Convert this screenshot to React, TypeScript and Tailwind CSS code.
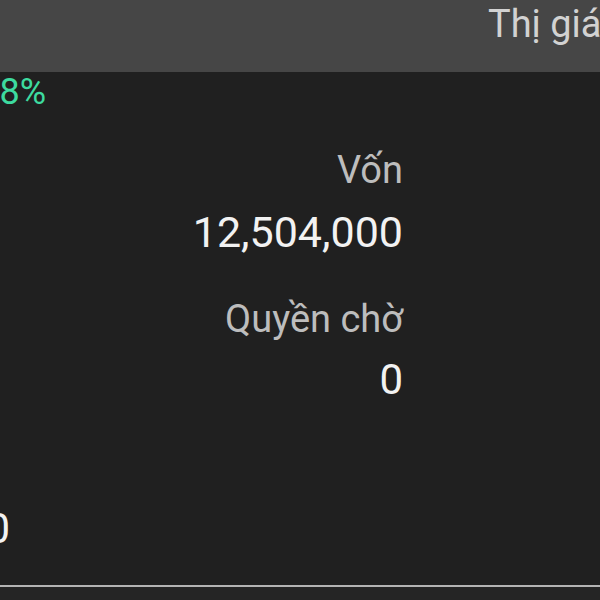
import React from "react";

const App: React.FC = () => {
  return (
    <div className="w-[600px] h-[600px] overflow-hidden flex flex-col bg-[#202020] font-['Roboto',sans-serif]">
      {/* column header row */}
      <div className="h-[72px] shrink-0 bg-[#464646] flex whitespace-nowrap">
        <div className="w-[488px] shrink-0" />
        <span className="text-[38px] leading-[48px] text-[#d2d2d2]">Thị giá</span>
      </div>

      <div className="flex-1 flex">
        {/* left column (cut off) */}
        <div className="w-[46px] shrink-0 flex flex-col items-end whitespace-nowrap">
          <span className="text-[36px] leading-[40px] text-[#3ddb9f]">+0.58%</span>
          <span className="mt-[391px] mr-[36px] text-[42px] leading-[52px] text-[#f2f2f2]">0</span>
        </div>

        {/* right column */}
        <div className="w-[357px] shrink-0 flex flex-col items-end whitespace-nowrap">
          <span className="mt-[76px] text-[38px] leading-[44px] text-[#bdbdbd]">Vốn</span>
          <span className="mt-[14px] text-[43px] leading-[52px] text-[#f2f2f2]">12,504,000</span>
          <span className="mt-[39px] text-[38px] leading-[44px] text-[#bdbdbd]">Quyền chờ</span>
          <span className="mt-[13px] text-[42px] leading-[52px] text-[#f2f2f2]">0</span>
        </div>
      </div>

      <div className="h-[2px] shrink-0 bg-[#b4b4b4]" />
      <div className="h-[13px] shrink-0 bg-[#252525]" />
    </div>
  );
};

export default App;
